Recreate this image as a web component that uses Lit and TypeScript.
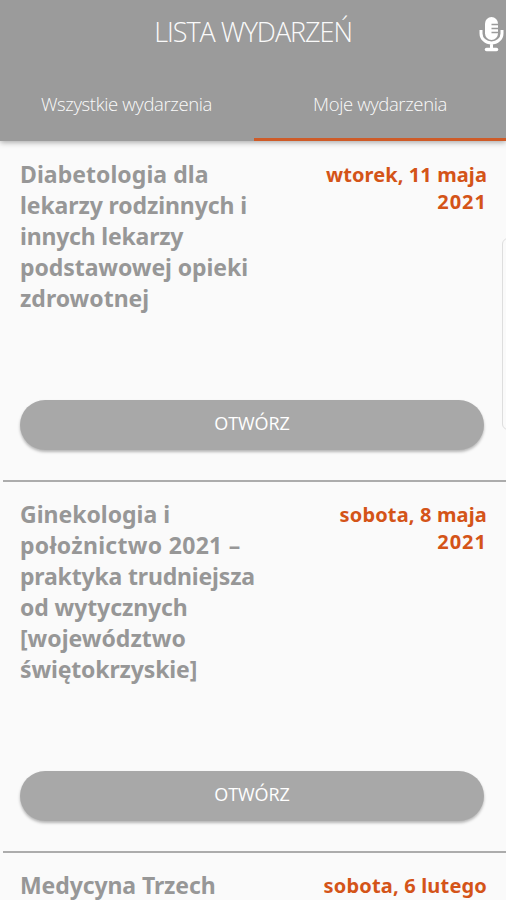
import { LitElement, html, css } from "lit";
import { customElement } from "lit/decorators.js";

interface TextLine {
  text: string;
  tracking: number;
}

interface EventItem {
  title: TextLine[];
  date: TextLine[];
}

const line = (text: string, tracking = 0): TextLine => ({ text, tracking });

const EVENTS: EventItem[] = [
  {
    title: [
      line("Diabetologia dla", 0.05),
      line("lekarzy rodzinnych i", -0.1),
      line("innych lekarzy", -0.2),
      line("podstawowej opieki", -0.07),
      line("zdrowotnej"),
    ],
    date: [line("wtorek, 11 maja", 0.1), line("2021", 1)],
  },
  {
    title: [
      line("Ginekologia i"),
      line("położnictwo 2021 –", 0.3),
      line("praktyka trudniejsza", -0.17),
      line("od wytycznych", -0.1),
      line("[województwo"),
      line("świętokrzyskie]", -0.13),
    ],
    date: [line("sobota, 8 maja", 0.15), line("2021", 1)],
  },
  {
    title: [line("Medycyna Trzech", -0.1)],
    date: [line("sobota, 6 lutego", 0.18)],
  },
];

@customElement("app-root")
export class AppRoot extends LitElement {
  static styles = css`
    :host {
      display: block;
      position: relative;
      height: 900px;
      overflow: hidden;
      background: #fafafa;
      font-family: "Noto Sans", "Open Sans", sans-serif;
    }
    .header {
      position: relative;
      z-index: 1;
      height: 141px;
      background: #9b9b9b;
      color: #fafafa;
      box-shadow: 0 1px 6px rgba(0, 0, 0, 0.38);
      display: flex;
      flex-direction: column;
    }
    .bar {
      height: 68px;
      display: grid;
      grid-template-columns: 1fr auto 1fr;
    }
    .heading {
      grid-column: 2;
      margin: 0;
      font-family: "Open Sans", sans-serif;
      font-weight: 330;
      font-size: 27px;
      line-height: 63px;
      letter-spacing: -1.05px;
      white-space: nowrap;
    }
    .mic {
      justify-self: end;
      margin: 16px 2px 0 0;
      width: 25px;
      height: 36px;
    }
    .tabs {
      flex: 1;
      display: grid;
      grid-template-columns: 1fr 1fr;
    }
    .tab {
      text-align: center;
      font-family: "Open Sans", sans-serif;
      font-size: 18.5px;
      font-weight: 340;
      line-height: 72px;
      letter-spacing: -0.37px;
      box-sizing: border-box;
      height: 73px;
    }
    .active {
      border-bottom: 3px solid #ce5b28;
      margin-left: 1px;
    }
    .card {
      display: grid;
      grid-template-columns: 1fr auto;
      padding: 18px 19px 0 20px;
    }
    .rule + .card {
      padding-top: 17px;
    }
    .title {
      margin: 0;
      font-size: 23px;
      font-weight: 700;
      line-height: 31px;
      color: #979797;
    }
    .date {
      font-size: 20px;
      font-weight: 700;
      line-height: 27px;
      text-align: right;
      color: #d45418;
      padding-top: 2px;
    }
    .line {
      display: block;
      white-space: nowrap;
    }
    .open {
      grid-column: 1 / 3;
      margin: 86px 3px 30px 0;
      height: 50px;
      border: 0;
      border-radius: 25px;
      background: #a8a8a8;
      color: #fff;
      font-family: "Open Sans", sans-serif;
      font-size: 18px;
      letter-spacing: -0.1px;
      padding: 0 0 4px;
      box-shadow: 0 2px 3px rgba(0, 0, 0, 0.28);
    }
    .rule {
      height: 2px;
      margin-left: 3px;
      background: #acacac;
    }
    .card:last-child .open {
      display: none;
    }
    .edge {
      position: absolute;
      left: 502px;
      top: 238px;
      width: 20px;
      height: 190px;
      border: 1px solid #dedede;
      border-radius: 6px;
    }
  `;

  private lines(items: TextLine[]) {
    return items.map((l) => html`<span class="line" style="letter-spacing:${l.tracking}px">${l.text}</span>`);
  }

  render() {
    return html`
      <header class="header">
        <div class="bar">
          <h1 class="heading">LISTA WYDARZEŃ</h1>
          <svg class="mic" viewBox="0 0 25 36">
            <rect x="6" y="1" width="13" height="23" rx="6.5" fill="#fff" />
            <path d="M12.5 8.5H19M12.5 12.5H19M12.5 16.5H19" stroke="#9b9b9b" stroke-width="1.3" />
            <path d="M2 14v3.500a10.500 9.500 0 0 0 21 0V14M12.500 27v6" fill="none" stroke="#fff" stroke-width="3" />
            <path d="M7.500 33.500h10" stroke="#fff" stroke-width="3.500" stroke-linecap="round" />
          </svg>
        </div>
        <nav class="tabs">
          <div class="tab">Wszystkie wydarzenia</div>
          <div class="tab active">Moje wydarzenia</div>
        </nav>
      </header>
      <main>
        ${EVENTS.map(
          (e, i) => html`
            ${i > 0 ? html`<div class="rule"></div>` : ""}
            <article class="card">
              <h2 class="title">${this.lines(e.title)}</h2>
              <div class="date">${this.lines(e.date)}</div>
              <button class="open">OTWÓRZ</button>
            </article>
          `,
        )}
      </main>
      <div class="edge"></div>
    `;
  }
}
